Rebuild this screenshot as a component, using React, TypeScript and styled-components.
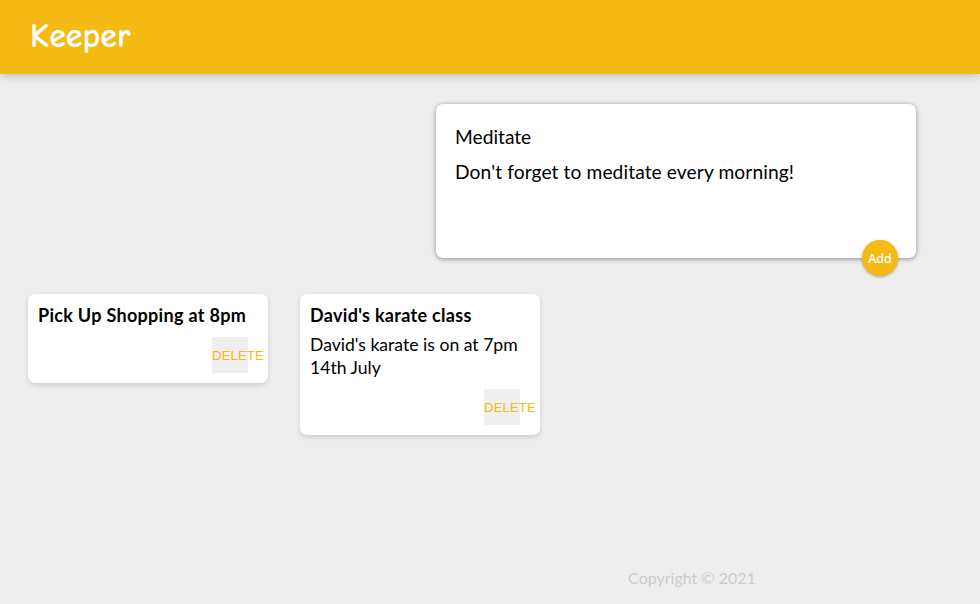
import React from "react";
import styled, { createGlobalStyle } from "styled-components";

const GlobalStyle = createGlobalStyle`
  * { margin: 0; padding: 0; box-sizing: border-box; }
  body {
    background: #eeeeee;
    font-family: Lato, "Noto Sans", sans-serif;
  }
`;

const Stage = styled.div`
  width: 100%;
  min-height: 604px;
  display: flex;
  flex-direction: column;
`;

const Header = styled.header`
  background-color: #f5ba13;
  padding: 16px 32px;
  height: 74px;
  box-shadow: 0 0 10px 0 rgba(0, 0, 0, 0.3);
  position: relative;
  z-index: 1;
`;

const Logo = styled.h1`
  color: #fff;
  font-family: "Comic Sans MS", "Comic Neue", cursive;
  font-weight: 700;
  font-size: 34px;
  line-height: 41px;
  margin-left: -2px;
`;

const Main = styled.main`
  flex: 1;
  padding: 0 12px;
`;

const CreateForm = styled.form`
  position: relative;
  width: 480px;
  height: 154px;
  margin: 30px 52px 20px auto;
  background: #fff;
  padding: 15px;
  border-radius: 7px;
  box-shadow: 0 1px 5px rgb(138, 137, 137);
  display: flex;
  flex-direction: column;
`;

const Field = styled.input`
  width: 100%;
  border: none;
  padding: 5px 4px 5px;
  outline: none;
  font-size: 19.2px;
  line-height: 25.5px;
  font-family: inherit;
  color: #000;
  background: transparent;
`;

const Area = styled.textarea`
  width: 100%;
  flex: 1;
  border: none;
  padding: 4px;
  outline: none;
  font-size: 19.2px;
  letter-spacing: 0.1px;
  line-height: 25.5px;
  font-family: inherit;
  color: #000;
  resize: none;
  background: transparent;
`;

const AddButton = styled.button`
  position: absolute;
  right: 18px;
  bottom: -18px;
  background: #f5ba13;
  color: #fff;
  border: none;
  border-radius: 50%;
  width: 36px;
  height: 36px;
  box-shadow: 0 1px 3px rgba(0, 0, 0, 0.3);
  font-family: "Noto Sans", sans-serif;
  font-size: 12.5px;
  font-weight: 500;
  cursor: pointer;
`;

const Notes = styled.div`
  display: flex;
  align-items: flex-start;
`;

const Note = styled.div`
  background: #fff;
  border-radius: 7px;
  box-shadow: 0 2px 5px #ccc;
  padding: 10px;
  width: 240px;
  margin: 16px;
  display: flex;
  flex-direction: column;
`;

const NoteTitle = styled.h1`
  font-size: 18px;
  letter-spacing: 0.3px;
  line-height: 23px;
  font-weight: 700;
  color: #000;
  margin-bottom: 6px;
`;

const NoteText = styled.p<{ $empty?: boolean }>`
  font-size: 17.6px;
  line-height: 23px;
  color: #000;
  white-space: pre-wrap;
  margin-bottom: ${(p) => (p.$empty ? "4px" : "10px")};
`;

const DeleteButton = styled.button`
  align-self: flex-end;
  margin-right: 10px;
  color: #f5ba13;
  background: #efefef;
  border: none;
  width: 36px;
  height: 36px;
  display: flex;
  align-items: center;
  justify-content: flex-start;
  white-space: nowrap;
  overflow: visible;
  font-family: "Liberation Sans", Arial, sans-serif;
  font-size: 13.333px;
  cursor: pointer;
`;

const Footer = styled.footer`
  height: 40px;
  padding-left: 404px;
  text-align: center;
`;

const FooterText = styled.p`
  color: #ccc;
  font-size: 16px;
  line-height: 28px;
`;

const notes = [
  { title: "Pick Up Shopping at 8pm", content: "" },
  { title: "David's karate class", content: "David's karate is on at 7pm\n14th July" },
];

export default function App() {
  return (
    <>
      <GlobalStyle />
      <Stage>
        <Header>
          <Logo>Keeper</Logo>
        </Header>
        <Main>
          <CreateForm onSubmit={(e) => e.preventDefault()}>
            <Field name="title" placeholder="Title" defaultValue="Meditate" />
            <Area
              name="content"
              placeholder="Take a note..."
              rows={3}
              defaultValue="Don't forget to meditate every morning!"
            />
            <AddButton type="button">Add</AddButton>
          </CreateForm>
          <Notes>
            {notes.map((n) => (
              <Note key={n.title}>
                <NoteTitle>{n.title}</NoteTitle>
                {n.content ? <NoteText>{n.content}</NoteText> : <NoteText $empty />}
                <DeleteButton>DELETE</DeleteButton>
              </Note>
            ))}
          </Notes>
        </Main>
        <Footer>
          <FooterText>Copyright © 2021</FooterText>
        </Footer>
      </Stage>
    </>
  );
}
